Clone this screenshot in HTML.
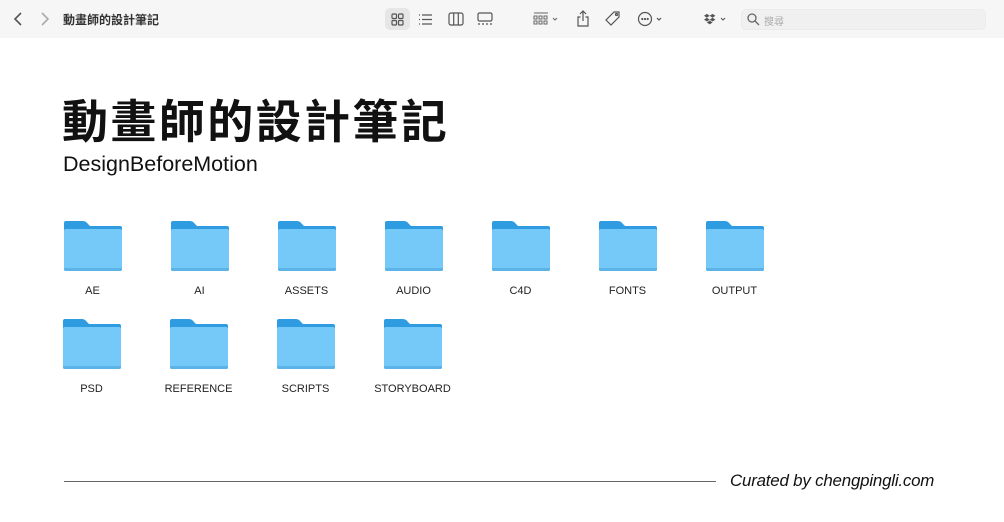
<!DOCTYPE html>
<html><head><meta charset="utf-8"><style>
*{margin:0;padding:0;box-sizing:border-box}
body{width:1004px;height:522px;background:#fff;position:relative;overflow:hidden;font-family:"Liberation Sans","Noto Sans CJK TC",sans-serif}
.bar{position:absolute;left:0;top:0;width:1004px;height:38px;background:#f6f6f6}
.a{position:absolute}
.f{position:absolute;width:58px;height:50px}
.l{position:absolute;width:107px;text-align:center;font-size:11px;color:#222}
svg{display:block}
</style></head><body>
<div class="bar"></div>
<svg class="a" style="left:12px;top:11px" width="12" height="16"><path d="M9 2L3 8l6 6" stroke="#555" stroke-width="1.6" fill="none"/></svg>
<svg class="a" style="left:39px;top:11px" width="12" height="16"><path d="M3 2l6 6-6 6" stroke="#aaa" stroke-width="1.6" fill="none"/></svg>
<div class="a" style="left:63px;top:11px;font-size:12px;font-weight:bold;color:#333">動畫師的設計筆記</div>
<div class="a" style="left:385px;top:8px;width:25px;height:22px;background:#e6e6e6;border-radius:5px"></div>
<svg class="a" style="left:391px;top:13px" width="13" height="13" fill="none" stroke="#555" stroke-width="1.2"><rect x="1" y="1" width="4.5" height="4.5" rx="1"/><rect x="7.5" y="1" width="4.5" height="4.5" rx="1"/><rect x="1" y="7.5" width="4.5" height="4.5" rx="1"/><rect x="7.5" y="7.5" width="4.5" height="4.5" rx="1"/></svg>
<svg class="a" style="left:418px;top:13px" width="15" height="13" stroke="#555" stroke-width="1.2"><path d="M1 2h1M1 6.5h1M1 11h1M4 2h10M4 6.5h10M4 11h10"/></svg>
<svg class="a" style="left:448px;top:12px" width="16" height="14" fill="none" stroke="#555" stroke-width="1.2"><rect x="1" y="1" width="14" height="12" rx="2"/><path d="M5.7 1v12M10.3 1v12"/></svg>
<svg class="a" style="left:477px;top:12px" width="16" height="14" fill="none" stroke="#555" stroke-width="1.2"><rect x="1" y="1" width="14" height="8" rx="1.5"/><path d="M1 12h2M5 12h2M9 12h2M13 12h2"/></svg>
<svg class="a" style="left:533px;top:12px" width="26" height="14" fill="none" stroke="#666" stroke-width="1"><path d="M1 1h14"/><rect x="1" y="4" width="3" height="3"/><rect x="6" y="4" width="3" height="3"/><rect x="11" y="4" width="3" height="3"/><rect x="1" y="9" width="3" height="3"/><rect x="6" y="9" width="3" height="3"/><rect x="11" y="9" width="3" height="3"/><path d="M20 6l2 2 2-2"/></svg>
<svg class="a" style="left:576px;top:10px" width="14" height="17" fill="none" stroke="#555" stroke-width="1.2"><path d="M7 1v10M4 4l3-3 3 3M4.5 7H2v9h10V7H9.5"/></svg>
<svg class="a" style="left:604px;top:10px" width="18" height="18" fill="none" stroke="#555" stroke-width="1.2"><path d="M10 2h5v5l-8 8-5-5z"/><circle cx="12.5" cy="4.5" r="1"/></svg>
<svg class="a" style="left:637px;top:11px" width="28" height="16" fill="none" stroke="#555" stroke-width="1.2"><circle cx="8" cy="8" r="6.5"/><circle cx="5.3" cy="8" r=".5"/><circle cx="8" cy="8" r=".5"/><circle cx="10.7" cy="8" r=".5"/><path d="M20 7l2 2 2-2"/></svg>
<svg class="a" style="left:703px;top:12px" width="26" height="14"><path d="M3 2l3 2-3 2-3-2zM9 2l3 2-3 2-3-2zM3 6l3 2-3 2-3-2zM9 6l3 2-3 2-3-2zM6 9l3 2-3 2-3-2z" fill="#555" transform="translate(1,0) scale(.95)"/><path d="M18 6l2 2 2-2" stroke="#555" fill="none"/></svg>
<div class="a" style="left:741px;top:9px;width:245px;height:21px;background:#f0f0f0;border-radius:5px;border:1px solid #ebebeb"></div>
<svg class="a" style="left:747px;top:13px" width="13" height="13" fill="none" stroke="#666" stroke-width="1.3"><circle cx="5" cy="5" r="4"/><path d="M8 8l4 4"/></svg>
<div class="a" style="left:764px;top:13px;font-size:10px;color:#aaa">搜尋</div>

<div class="a" style="left:62px;top:92px;font-size:46px;font-weight:bold;color:#111;letter-spacing:2.4px;line-height:60px">動畫師的設計筆記</div>
<div class="a" style="left:63px;top:152px;font-size:21.5px;color:#111">DesignBeforeMotion</div>

<svg width="0" height="0" style="position:absolute"><defs><g id="fd"><path d="M2 0h17q3 0 5 3l2 2h30q2 0 2 2v41q0 2-2 2H2q-2 0-2-2V2q0-2 2-2z" fill="#2f9be0"/><path d="M2 8h54q2 0 2 2v38q0 2-2 2H2q-2 0-2-2V10q0-2 2-2z" fill="#74c9f9"/><path d="M0 48q0 2 2 2h54q2 0 2-2v-1H0z" fill="#5cb3e8"/></g></defs></svg>

<svg class="f" style="left:64px;top:221px"><use href="#fd"/></svg>
<svg class="f" style="left:171px;top:221px"><use href="#fd"/></svg>
<svg class="f" style="left:278px;top:221px"><use href="#fd"/></svg>
<svg class="f" style="left:385px;top:221px"><use href="#fd"/></svg>
<svg class="f" style="left:492px;top:221px"><use href="#fd"/></svg>
<svg class="f" style="left:599px;top:221px"><use href="#fd"/></svg>
<svg class="f" style="left:706px;top:221px"><use href="#fd"/></svg>
<svg class="f" style="left:63px;top:319px"><use href="#fd"/></svg>
<svg class="f" style="left:170px;top:319px"><use href="#fd"/></svg>
<svg class="f" style="left:277px;top:319px"><use href="#fd"/></svg>
<svg class="f" style="left:384px;top:319px"><use href="#fd"/></svg>

<div class="l" style="left:39px;top:285px">AE</div>
<div class="l" style="left:146px;top:285px">AI</div>
<div class="l" style="left:253px;top:285px">ASSETS</div>
<div class="l" style="left:360px;top:285px">AUDIO</div>
<div class="l" style="left:467px;top:285px">C4D</div>
<div class="l" style="left:574px;top:285px">FONTS</div>
<div class="l" style="left:681px;top:285px">OUTPUT</div>
<div class="l" style="left:38px;top:383px">PSD</div>
<div class="l" style="left:145px;top:383px">REFERENCE</div>
<div class="l" style="left:252px;top:383px">SCRIPTS</div>
<div class="l" style="left:359px;top:383px">STORYBOARD</div>

<div class="a" style="left:64px;top:481px;width:652px;height:1px;background:#666"></div>
<div class="a" style="left:730px;top:471px;font-size:16.9px;font-style:italic;color:#111;letter-spacing:-0.2px">Curated by chengpingli.com</div>
</body></html>
